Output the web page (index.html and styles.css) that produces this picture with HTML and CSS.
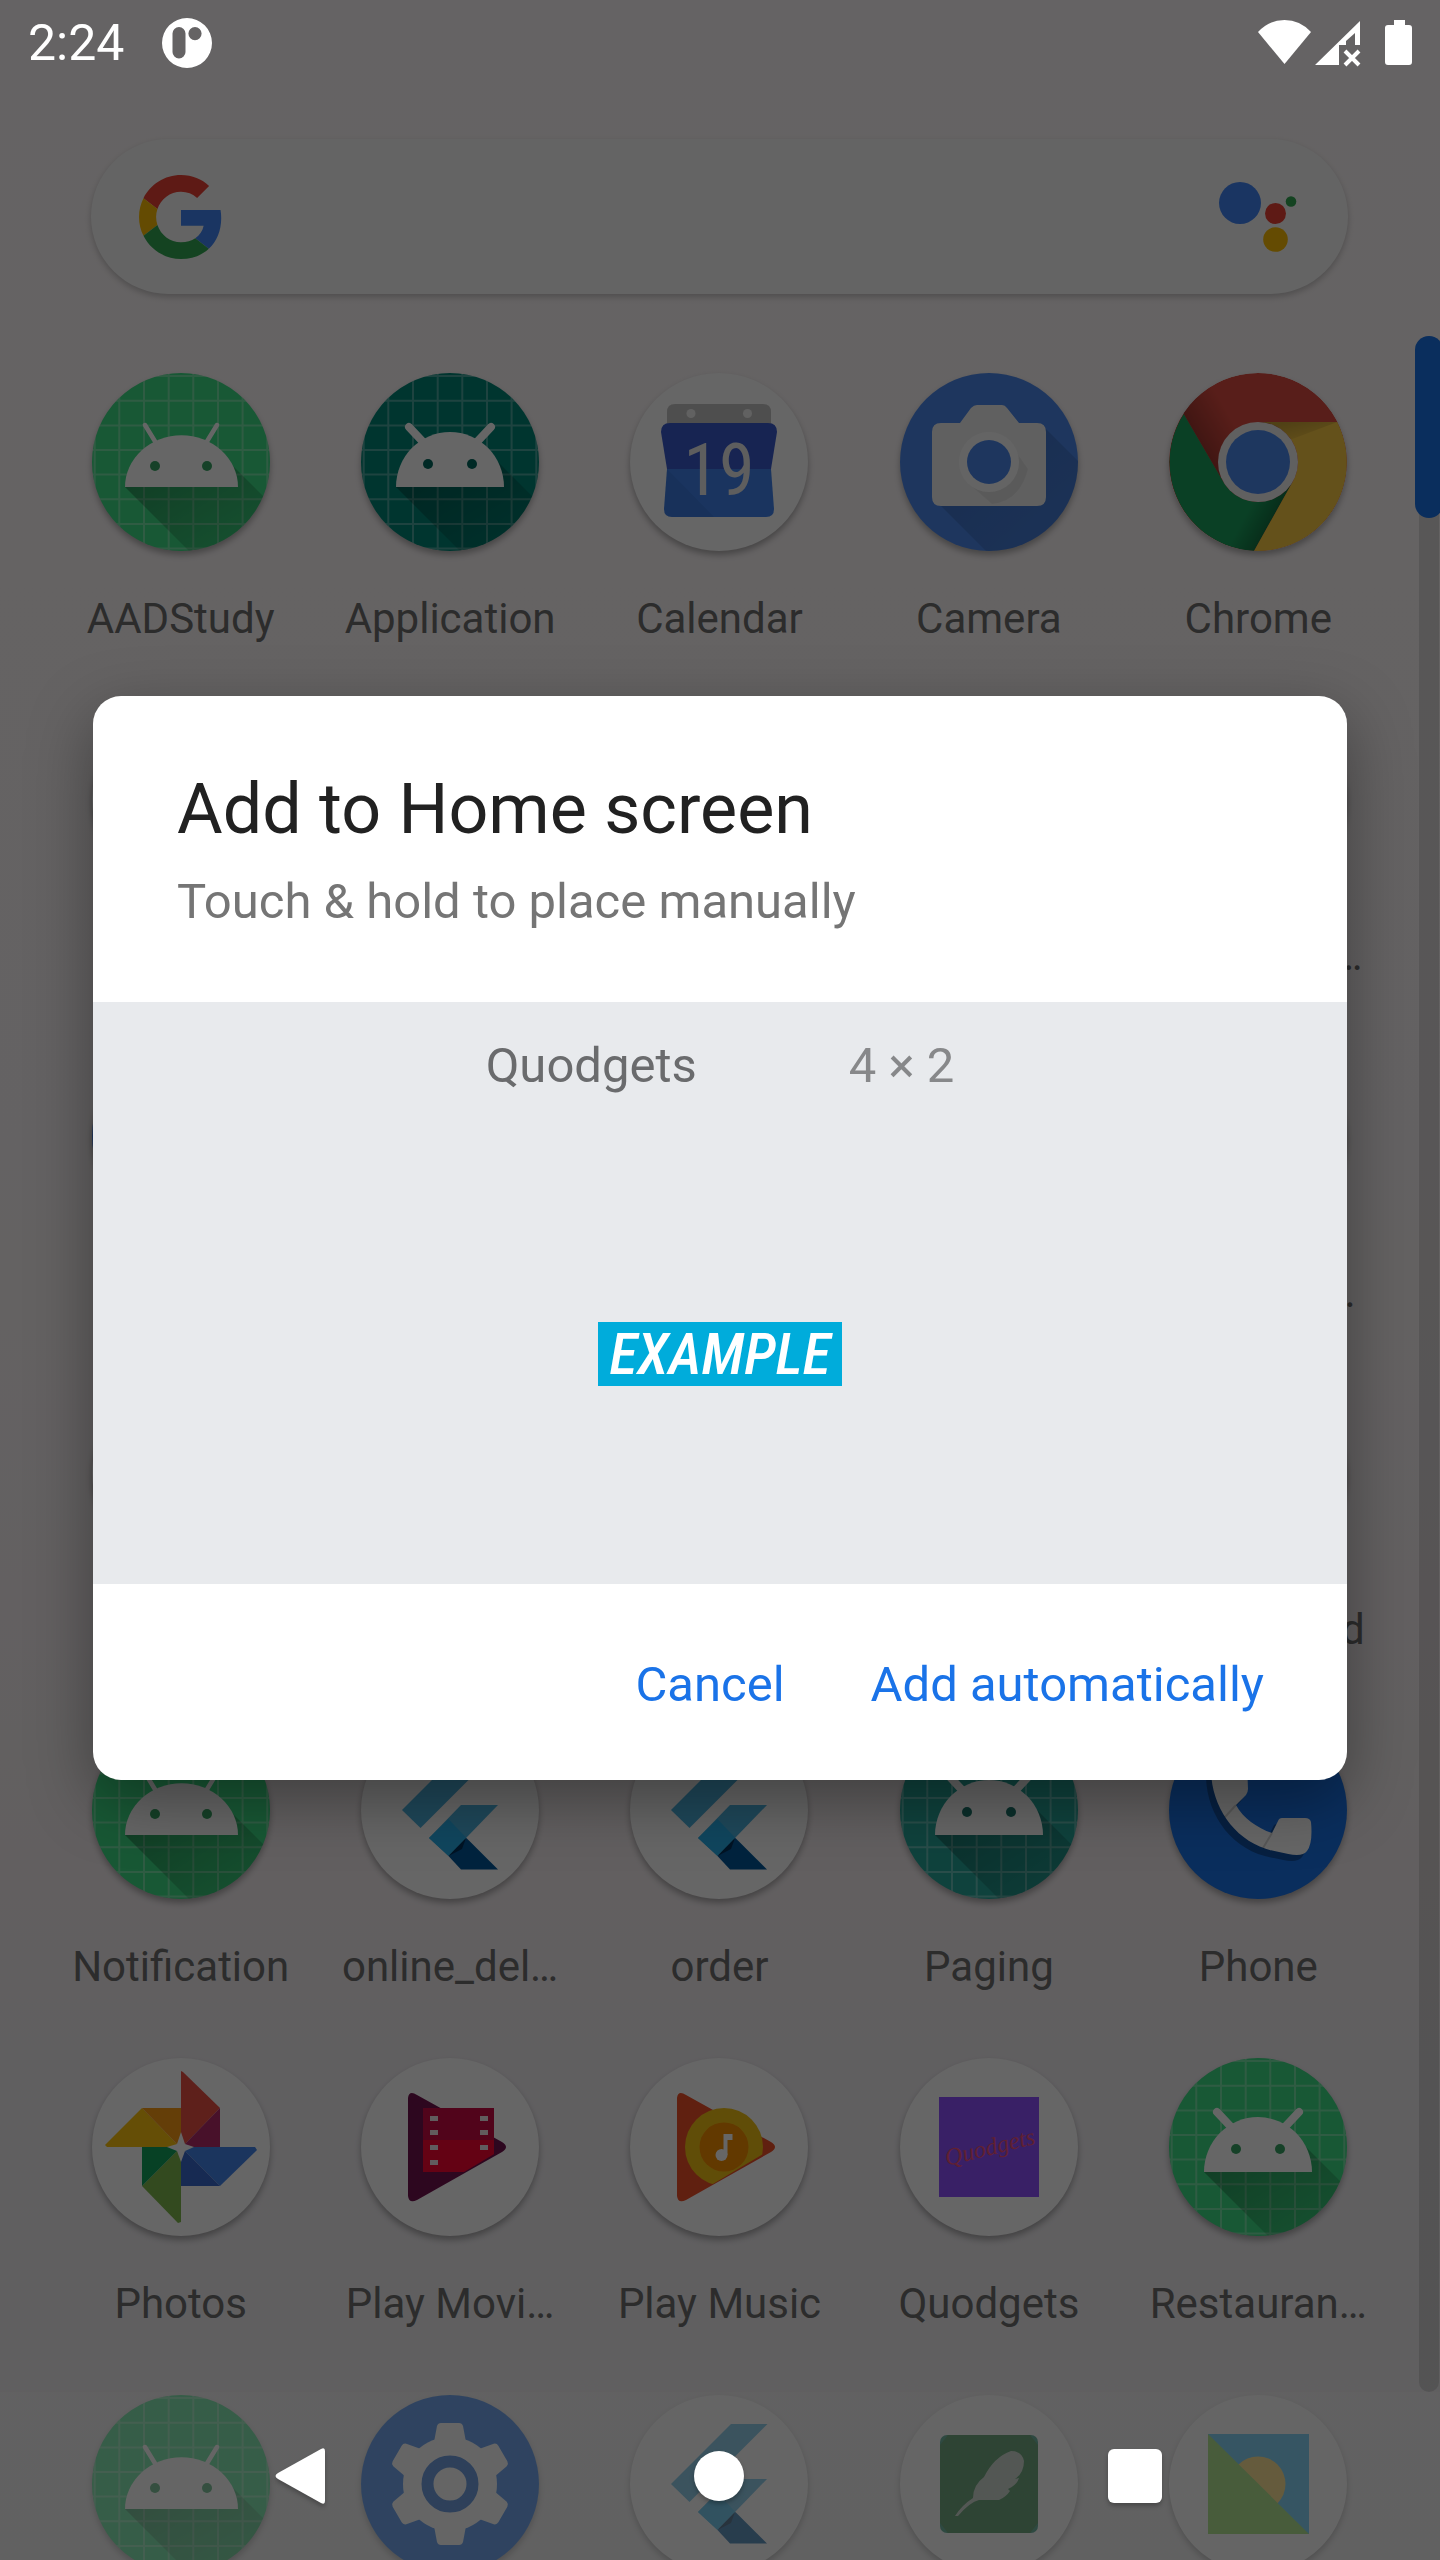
FILE: index.html
```
<!DOCTYPE html>
<html lang="en">
<head>
<meta charset="utf-8">
<meta name="viewport" content="width=device-width, initial-scale=1">
<title>Add to Home screen</title>
<link rel="stylesheet" href="styles.css">
</head>
<body>
<svg class="defs" aria-hidden="true">
  <defs>
    <linearGradient id="shade" x1="0" y1="0" x2="1" y2="1">
      <stop offset="0" stop-color="#000" stop-opacity=".32"/>
      <stop offset="1" stop-color="#000" stop-opacity=".06"/>
    </linearGradient>
    <linearGradient id="softshade" x1="0" y1="0" x2="1" y2="1">
      <stop offset="0" stop-color="#000" stop-opacity=".16"/>
      <stop offset="1" stop-color="#000" stop-opacity=".08"/>
    </linearGradient>
    <linearGradient id="redshade" gradientUnits="userSpaceOnUse" x1="32" y1="76" x2="68" y2="55">
      <stop offset="0" stop-color="#000" stop-opacity=".28"/>
      <stop offset="1" stop-color="#000" stop-opacity="0"/>
    </linearGradient>
    <linearGradient id="goldshade" gradientUnits="userSpaceOnUse" x1="120" y1="49" x2="126" y2="74">
      <stop offset="0" stop-color="#000" stop-opacity=".2"/>
      <stop offset="1" stop-color="#000" stop-opacity="0"/>
    </linearGradient>
    <linearGradient id="greenshade" gradientUnits="userSpaceOnUse" x1="106" y1="145" x2="82" y2="132">
      <stop offset="0" stop-color="#000" stop-opacity=".3"/>
      <stop offset="1" stop-color="#000" stop-opacity="0"/>
    </linearGradient>
    <clipPath id="playclip"><path d="M47 40Q48 32 56 37L141 84Q149 89 141 94L56 142Q48 146 47 138Z"/></clipPath>
    <clipPath id="slant"><path d="M0 0H133V76L145 89L56 142L0 178Z"/></clipPath>
    <symbol id="grid" viewBox="0 0 178 178">
      <path d="M2.7 0V178M27.3 0V178M52 0V178M76.7 0V178M101.3 0V178M126 0V178M150.6 0V178M175.3 0V178M0 3H178M0 27.7H178M0 52.4H178M0 77H178M0 101.6H178M0 126.3H178M0 151H178M0 175.4H178" stroke="#fff" stroke-opacity=".3" stroke-width="2" fill="none"/>
    </symbol>
    <symbol id="robot-thin" viewBox="0 0 178 178">
      <use href="#grid"/>
      <path d="M33 114L97 178H178V130L139 91Z" fill="url(#shade)"/>
      <path d="M33 114A56.500 51.700 0 0 1 146 114Z" fill="#fff"/>
      <path d="M53 52L64 70M125 52L114 70" stroke="#fff" stroke-width="4.500" stroke-linecap="round"/>
      <g fill="currentColor"><circle cx="63" cy="93" r="5"/><circle cx="115" cy="93" r="5"/></g>
    </symbol>
    <symbol id="robot" viewBox="0 0 178 178">
      <use href="#grid"/>
      <path d="M35 114L99 178H178V130L136 88Z" fill="url(#shade)"/>
      <path d="M35 114A54 55 0 0 1 143 114Z" fill="#fff"/>
      <path d="M48 54L63 70M130 54L115 70" stroke="#fff" stroke-width="8" stroke-linecap="round"/>
      <g fill="currentColor"><circle cx="67" cy="91" r="5"/><circle cx="111" cy="91" r="5"/></g>
    </symbol>
    <symbol id="flutter" viewBox="0 0 178 178">
      <path d="M101 29H137.500L59.500 107L41 89Z" fill="#4fb3e0"/>
      <path d="M100 84H137L105 117L87.500 135L68 117Z" fill="#4fb3e0"/>
      <path d="M87.500 98L105.400 117L87.500 135L68 117Z" fill="#29b0ea"/>
      <path d="M105.400 117L137 148.500H100L87.500 135Z" fill="#01579b"/>
      <path d="M87.500 135L105 117L101 128Z" fill="#003059"/>
    </symbol>
  </defs>
</svg>

<div class="screen">
  <main class="launcher">
    <form class="search" action="#">
      <button class="icon-btn" type="button" aria-label="Google">
        <svg width="84" height="84" viewBox="0 0 48 48">
          <path fill="#ea4335" d="M24 9.500c3.540 0 6.710 1.220 9.210 3.600l6.850-6.850C35.900 2.380 30.470 0 24 0 14.620 0 6.510 5.380 2.560 13.220l7.980 6.190C12.430 13.720 17.740 9.500 24 9.500z"/>
          <path fill="#4285f4" d="M46.980 24.550c0-1.570-.150-3.090-.380-4.550H24v9.020h12.940c-.580 2.960-2.260 5.480-4.780 7.180l7.730 6c4.510-4.180 7.090-10.360 7.090-17.650z"/>
          <path fill="#fbbc05" d="M10.530 28.590c-.480-1.450-.760-2.990-.760-4.590s.270-3.140.760-4.590l-7.980-6.190C.920 16.460 0 20.120 0 24c0 3.880.920 7.540 2.560 10.780l7.970-6.190z"/>
          <path fill="#34a853" d="M24 48c6.480 0 11.930-2.130 15.890-5.810l-7.730-6c-2.150 1.450-4.920 2.300-8.160 2.300-6.260 0-11.570-4.220-13.470-9.910l-7.980 6.190C6.510 42.620 14.620 48 24 48z"/>
        </svg>
      </button>
      <input class="search-input" type="text" aria-label="Search">
      <button class="icon-btn" type="button" aria-label="Assistant">
        <svg width="80" height="80" viewBox="0 0 80 80">
          <circle cx="21" cy="26" r="21" fill="#4285f4"/>
          <circle cx="56.500" cy="36.500" r="10.500" fill="#ea4335"/>
          <circle cx="72" cy="24.500" r="5.300" fill="#34a853"/>
          <circle cx="56.500" cy="62.500" r="12.300" fill="#fbbc05"/>
        </svg>
      </button>
    </form>

    <nav class="apps" aria-label="Apps">
      <a class="app" href="#"><svg class="tile green" viewBox="0 0 178 178"><use href="#robot-thin"/></svg><span class="label">AADStudy</span></a>
      <a class="app" href="#"><svg class="tile teal-dark" viewBox="0 0 178 178"><use href="#robot"/></svg><span class="label">Application</span></a>
      <a class="app" href="#"><svg class="tile" viewBox="0 0 178 178">
        <path d="M37 52V39Q37 31 45 31H133Q141 31 141 39V52Z" fill="#c4c4c4"/>
        <circle cx="61" cy="40.500" r="4.500" fill="#f2f2f2"/><circle cx="117.500" cy="40.500" r="4.500" fill="#f2f2f2"/>
        <path d="M37 96H141L144 136Q144 144 136 144H42Q34 144 34 136Z" fill="#4183ee"/>
        <path d="M37 96L84 144H42Q34 144 34 136Z" fill="#000" fill-opacity=".06"/>
        <path d="M40 50H138Q147 50 147 59L141 96H37L31 59Q31 50 40 50Z" fill="#3a5bcd"/>
        <text class="cal-day" x="89" y="122" text-anchor="middle">19</text>
      </svg><span class="label">Calendar</span></a>
      <a class="app" href="#"><svg class="tile camera" viewBox="0 0 178 178">
        <path d="M40 132L86 178H178V88L144 54Z" fill="url(#softshade)"/>
        <path d="M41 50H60L71 35Q74 32 77 32H102Q105 32 107 35L119 50H137Q146 50 146 59V124Q146 133 137 133H41Q32 133 32 124V59Q32 50 41 50Z" fill="#f1f1f1"/>
        <path d="M68 110L92 131Q120 128 128 96L110 70Z" fill="#000" fill-opacity=".06"/>
        <circle cx="89" cy="89" r="30" fill="#fbfbfb"/><circle cx="89" cy="89" r="22" fill="#4c88ec"/>
      </svg><span class="label">Camera</span></a>
      <a class="app" href="#"><svg class="tile" viewBox="0 0 178 178">
        <circle cx="89" cy="89" r="89" fill="#dc4c41"/>
        <path d="M14.700 41L54.400 109L89 49L60 0H0Z" fill="url(#redshade)"/>
        <path d="M14.700 41L54.400 109A40 40 0 0 0 123.600 109L85 178A89 89 0 0 1 14.700 41Z" fill="#1aa05d"/>
        <path d="M123.600 109L85 178H50L70 120Z" fill="url(#greenshade)"/>
        <path d="M168.300 49H89A40 40 0 0 1 123.600 109L85 178A89 89 0 0 0 168.300 49Z" fill="#fbca44"/>
        <path d="M168.300 49H89L118 68Z" fill="url(#goldshade)"/>
        <circle cx="89" cy="89" r="40" fill="#f1f1f1"/><circle cx="89" cy="89" r="32" fill="#4d89ee"/>
      </svg><span class="label">Chrome</span></a>

      <a class="app" href="#"><span class="tile"></span></a>
      <a class="app" href="#"><span class="tile"></span></a>
      <a class="app" href="#"><span class="tile"></span></a>
      <a class="app" href="#"><span class="tile"></span></a>
      <a class="app" href="#"><span class="tile"></span><span class="label">Contact L…</span></a>

      <a class="app" href="#"><span class="tile camera"></span></a>
      <a class="app" href="#"><span class="tile"></span></a>
      <a class="app" href="#"><span class="tile"></span></a>
      <a class="app" href="#"><span class="tile"></span></a>
      <a class="app" href="#"><span class="tile"></span><span class="label">Live Wall…</span></a>

      <a class="app" href="#"><span class="tile"></span></a>
      <a class="app" href="#"><span class="tile"></span></a>
      <a class="app" href="#"><span class="tile"></span></a>
      <a class="app" href="#"><span class="tile"></span></a>
      <a class="app" href="#"><span class="tile"></span><span class="label">My Android</span></a>

      <a class="app" href="#"><svg class="tile green" viewBox="0 0 178 178"><use href="#robot-thin"/></svg><span class="label">Notification</span></a>
      <a class="app" href="#"><svg class="tile" viewBox="0 0 178 178"><use href="#flutter"/></svg><span class="label">online_del…</span></a>
      <a class="app" href="#"><svg class="tile" viewBox="0 0 178 178"><use href="#flutter"/></svg><span class="label">order</span></a>
      <a class="app" href="#"><svg class="tile teal" viewBox="0 0 178 178"><use href="#robot"/></svg><span class="label">Paging</span></a>
      <a class="app" href="#"><svg class="tile phone" viewBox="0 0 178 178">
        <path transform="translate(-5 6)" d="M47 40Q42 42 42 50C43 90 70 125 110 131C122 134 134 136 138 130Q144 122 142 101Q141 97 136 97H113Q110 97 109 100L103 112C88 107 74 97 67 84L77 74Q79 71 79 68L78 42Z" fill="#000" fill-opacity=".3"/>
        <path d="M47 40Q42 42 42 50C43 90 70 125 110 131C122 134 134 136 138 130Q144 122 142 101Q141 97 136 97H113Q110 97 109 100L103 112C88 107 74 97 67 84L77 74Q79 71 79 68L78 42Z" fill="#fff"/>
        <path d="M67 84L56 96M103 112L94 127" stroke="#000" stroke-opacity=".15" stroke-width="2"/>
      </svg><span class="label">Phone</span></a>

      <a class="app" href="#"><svg class="tile" viewBox="0 0 178 178">
        <path d="M89 13L91 14L128 50L93 86L89 74Z" fill="#ea5044"/>
        <path d="M128 50V89H102L93 86Z" fill="#b32b6a"/>
        <path d="M102 89H163L165 92L128 128L93 93Z" fill="#4585ea"/>
        <path d="M89 104V128H128L93 93Z" fill="#3a69cd"/>
        <path d="M89 104V164L86 165L50 128L85 93Z" fill="#7fb84e"/>
        <path d="M50 89V128L85 93L75 89Z" fill="#12a45d"/>
        <path d="M75 89H15L13 87L50 50L85 86Z" fill="#fcc211"/>
        <path d="M50 50H89V74L85 86Z" fill="#fb9b15"/>
      </svg><span class="label">Photos</span></a>
      <a class="app" href="#"><svg class="tile" viewBox="0 0 178 178">
        <g clip-path="url(#playclip)"><path d="M40 30H150V148H40Z" fill="#72124f"/></g>
        <g clip-path="url(#slant)"><path d="M62 50H133V82H62Z" fill="#ca0a45"/><path d="M62 82H133V101L111 114H62Z" fill="#fa0633"/></g>
        <path d="M69 58h8v5h-8zM69 72h8v5h-8zM69 87h8v5h-8zM69 102h8v5h-8zM119 58h8v5h-8zM119 72h8v5h-8zM119 87h8v5h-8z" fill="#f3e6ea"/>
      </svg><span class="label">Play Movi…</span></a>
      <a class="app" href="#"><svg class="tile" viewBox="0 0 178 178">
        <path d="M47 40Q48 32 56 37L141 84Q149 89 141 94L56 142Q48 146 47 138Z" fill="#ef5029"/>
        <g clip-path="url(#slant)"><circle cx="94" cy="89" r="39" fill="#f1c116"/></g>
        <circle cx="94" cy="89" r="24.500" fill="#f68e00"/>
        <circle cx="91.500" cy="97" r="6" fill="#fff"/><path d="M93.500 97V76H102.500V82H97.500V97Z" fill="#fff"/>
      </svg><span class="label">Play Music</span></a>
      <a class="app" href="#"><svg class="tile" viewBox="0 0 178 178">
        <path d="M39 39H139V139H39Z" fill="#8e50ff"/>
        <text class="script" x="90" y="97" text-anchor="middle" transform="rotate(-14 90 90)">Quodgets</text>
      </svg><span class="label">Quodgets</span></a>
      <a class="app" href="#"><svg class="tile green" viewBox="0 0 178 178"><use href="#robot"/></svg><span class="label">Restauran…</span></a>

      <a class="app" href="#"><svg class="tile green" viewBox="0 0 178 178"><use href="#robot-thin"/></svg></a>
      <a class="app" href="#"><svg class="tile settings" viewBox="0 0 178 178">
        <g fill="#fff" transform="translate(89 89)">
          <circle r="47"/>
          <path id="tooth" d="M-13 -58Q-12 -61 -9 -61H9Q12 -61 13 -58L16 -42Q18 -38 24 -36V-20H-24V-36Q-18 -38 -16 -42Z"/>
          <use href="#tooth" transform="rotate(60)"/><use href="#tooth" transform="rotate(120)"/><use href="#tooth" transform="rotate(180)"/><use href="#tooth" transform="rotate(240)"/><use href="#tooth" transform="rotate(300)"/>
        </g>
        <circle cx="89" cy="89" r="22.500" fill="none" stroke="#1b67d2" stroke-width="12"/>
      </svg></a>
      <a class="app" href="#"><svg class="tile" viewBox="0 0 178 178"><use href="#flutter"/></svg></a>
      <a class="app" href="#"><svg class="tile" viewBox="0 0 178 178">
        <rect x="40" y="40" width="98" height="98" rx="7" fill="#1b8a6a"/>
        <path d="M48 40H130L138 50V128L130 138H48L40 128V50Z" fill="#1b7532"/>
        <path d="M55 121Q62 110 73 103Q73 90 84 82Q94 62 111 56Q122 56 124 66Q124 78 115 84L119 83Q117 90 108 94L110 96Q106 102 99 105H79Q70 107 58 121Z" fill="#b4c4b8"/>
      </svg></a>
      <a class="app" href="#"><svg class="tile" viewBox="0 0 178 178">
        <path d="M39 39H140V139H39Z" fill="#3cbdf5"/><circle cx="89" cy="89" r="27.500" fill="#ffd45a"/><path d="M39 39L140 139H39Z" fill="#85d953"/>
      </svg></a>
    </nav>
    <div class="scrollbar"><div class="thumb"></div></div>
  </main>
  <div class="nav-shade"></div>
  <div class="scrim"></div>

  <header class="status">
    <time class="clock">2:24</time>
    <svg width="50" height="50" viewBox="0 0 50 50">
      <path fill="#fff" fill-rule="evenodd" d="M25 0A25 25 0 1 1 25 50A25 25 0 0 1 25 0ZM17 9A6.500 6.500 0 0 0 10.500 15.500V34A6.500 6.500 0 0 0 23.500 34V15.500A6.500 6.500 0 0 0 17 9ZM33 9A6.600 6.600 0 1 0 33 22.200A6.600 6.600 0 1 0 33 9Z"/>
    </svg>
    <svg class="signals" width="156" height="48" viewBox="0 0 156 48" fill="#fff">
      <path d="M0 13Q11 1 26.500 1Q42 1 53 13L26.500 45Z"/>
      <path fill-rule="evenodd" d="M57 46L102 2V26H97V14L88 22V26H81V46Z"/>
      <path d="M87 32L101 46M101 32L87 46" stroke="#fff" stroke-width="4"/>
      <path d="M136 1H147V6H151Q154 6 154 9V43Q154 46 151 46H130Q127 46 127 43V9Q127 6 130 6H136Z"/>
    </svg>
  </header>

  <div class="overlay">
    <section class="dialog" role="dialog" aria-labelledby="dialog-title">
      <div class="dialog-head">
        <h1 id="dialog-title">Add to Home screen</h1>
        <p>Touch &amp; hold to place manually</p>
      </div>
      <div class="preview">
        <div class="widget-info"><span>Quodgets</span><span class="size">4 × 2</span></div>
        <div class="widget"><span class="example">EXAMPLE</span></div>
      </div>
      <div class="actions">
        <button type="button">Cancel</button>
        <button type="button">Add automatically</button>
      </div>
    </section>
  </div>

  <footer class="navbar">
    <button type="button" aria-label="Back"><svg width="54" height="60" viewBox="0 0 54 60"><path d="M4 27L47 3Q51 1 51 5V55Q51 59 47 57L4 33Q-1 30 4 27Z"/></svg></button>
    <button type="button" aria-label="Home"><svg width="54" height="60" viewBox="0 0 54 60"><circle cx="28" cy="30" r="25"/></svg></button>
    <button type="button" aria-label="Overview"><svg width="54" height="60" viewBox="0 0 54 60"><rect x="0" y="3" width="54" height="54" rx="6"/></svg></button>
  </footer>
</div>
</body>
</html>
```
FILE: styles.css
```
* { box-sizing: border-box; }
body { margin: 0; font-family: Roboto, "Noto Sans", sans-serif; }
button, input { font: inherit; border: 0; padding: 0; background: none; }
.defs { position: absolute; width: 0; height: 0; }

/* Every layer of the screen shares one grid cell. */
.screen {
  display: grid;
  grid-template: minmax(0, 1fr) / minmax(0, 1fr);
  height: 100vh;
  overflow: hidden;
  background: linear-gradient(#fdf8f9 0, #fbf6f7 45%, #f5eef0 72%, #f0edf1 82%, #efeeef 100%);
}
.screen > * { grid-area: 1 / 1; }

.launcher { position: relative; overflow: hidden; }
.search {
  display: flex;
  align-items: center;
  justify-content: space-between;
  height: 155px;
  margin: 139px 92px 0 91px;
  padding: 0 49px 0 48px;
  border-radius: 78px;
  background: #fafafa;
  box-shadow: 0 3px 6px rgba(0, 0, 0, .22);
}
.search-input { flex: 1; min-width: 0; align-self: stretch; outline: 0; }
.icon-btn { display: flex; }

.apps {
  display: grid;
  grid-template-columns: repeat(5, minmax(0, 1fr));
  grid-auto-rows: 270px;
  row-gap: 67px;
  padding: 79px 47px 0 46px;
}
.app {
  display: flex;
  flex-direction: column;
  align-items: center;
  gap: 44px;
  padding: 0 24px;
  color: #6e6e6e;
  text-decoration: none;
}
.tile {
  flex: none;
  width: 178px;
  height: 178px;
  border-radius: 50%;
  background: #fefefe;
  box-shadow: 0 4px 6px rgba(0, 0, 0, .3);
}
.green { background: #3ddc84; color: #38a465; }
.teal { background: #26a69a; color: #1c766d; }
.teal-dark { background: #008577; color: #00665c; }
.camera { background: #4c88ec; }
.phone { background: #1a73e8; }
.settings { background: #1f74ec; }
.label { white-space: nowrap; font-size: 42px; line-height: 48px; }
.cal-day { font: 72px "Roboto Condensed", Roboto, sans-serif; fill: #ececec; }
.script { font: italic 24px "Liberation Serif", serif; fill: #f0527a; }

.scrollbar {
  position: absolute;
  top: 336px;
  right: 1px;
  bottom: 168px;
  width: 20px;
  border-radius: 10px;
  background: rgba(0, 0, 0, .12);
}
.thumb {
  width: 28px;
  height: 182px;
  margin-left: -4px;
  border-radius: 14px;
  background: #1a73e8;
}
.nav-shade { position: relative; align-self: end; height: 168px; background: rgba(250, 250, 250, .4); }
.scrim { position: relative; background: rgba(0, 0, 0, .6); }

.status {
  position: relative;
  align-self: start;
  display: flex;
  align-items: center;
  height: 86px;
  padding: 0 26px 0 28px;
  color: #fff;
}
.clock { margin-right: 38px; font-size: 50px; line-height: 60px; }
.signals { margin-left: auto; }

.overlay {
  position: relative;
  display: flex;
  align-items: center;
  padding: 0 93px 84px;
}
.dialog {
  flex: 1;
  border-radius: 28px;
  overflow: hidden;
  background: #fff;
  box-shadow: 0 20px 64px rgba(0, 0, 0, .36);
}
.dialog-head { padding: 71px 84px 64px; }
h1 { margin: 0 0 15px; font-size: 70px; line-height: 84px; font-weight: 400; color: #212121; }
.dialog-head p { margin: 0; font-size: 49px; line-height: 72px; color: #757575; }
.preview {
  display: flex;
  flex-direction: column;
  height: 582px;
  padding-top: 28px;
  background: #e8eaed;
}
.widget-info {
  display: flex;
  justify-content: center;
  gap: 152px;
  font-size: 49px;
  line-height: 72px;
  color: #6a6b6d;
}
.size { color: #87888a; }
.widget {
  flex: 1;
  display: flex;
  align-items: center;
  justify-content: center;
  padding-top: 22px;
}
.example {
  padding: 0 12px;
  background: #00acdb;
  color: #fff;
  font: italic 500 58px/64px "Roboto Condensed", Roboto, sans-serif;
}
.actions {
  display: flex;
  align-items: center;
  justify-content: flex-end;
  gap: 86px;
  height: 196px;
  padding: 6px 83px 0;
}
.actions button { font-size: 49px; line-height: 72px; color: #1a73e8; }

.navbar {
  position: relative;
  align-self: end;
  display: grid;
  grid-template-columns: repeat(3, 1fr);
  place-items: center;
  height: 168px;
  padding: 0 97px 0 93px;
}
.navbar button { display: flex; fill: #fff; filter: drop-shadow(0 3px 2px rgba(0, 0, 0, .25)); }
```
